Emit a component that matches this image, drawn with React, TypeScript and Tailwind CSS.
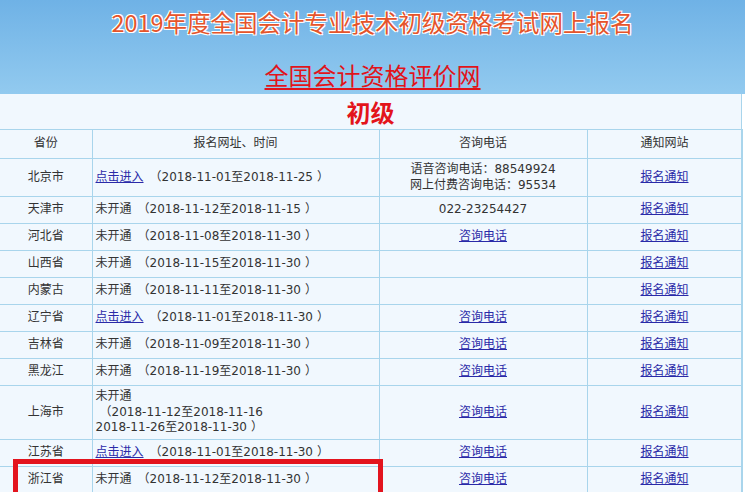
type Row = {
  name: string
  entry: "link" | "closed"
  dates: string[]
  phone: "link" | "none" | string[]
}

const rows: Row[] = [
  { name: "北京市", entry: "link", dates: ["2018-11-01至2018-11-25"], phone: ["语音咨询电话：88549924", "网上付费咨询电话：95534"] },
  { name: "天津市", entry: "closed", dates: ["2018-11-12至2018-11-15"], phone: ["022-23254427"] },
  { name: "河北省", entry: "closed", dates: ["2018-11-08至2018-11-30"], phone: "link" },
  { name: "山西省", entry: "closed", dates: ["2018-11-15至2018-11-30"], phone: "none" },
  { name: "内蒙古", entry: "closed", dates: ["2018-11-11至2018-11-30"], phone: "none" },
  { name: "辽宁省", entry: "link", dates: ["2018-11-01至2018-11-30"], phone: "link" },
  { name: "吉林省", entry: "closed", dates: ["2018-11-09至2018-11-30"], phone: "link" },
  { name: "黑龙江", entry: "closed", dates: ["2018-11-19至2018-11-30"], phone: "link" },
  { name: "上海市", entry: "closed", dates: ["2018-11-12至2018-11-16", "2018-11-26至2018-11-30"], phone: "link" },
  { name: "江苏省", entry: "link", dates: ["2018-11-01至2018-11-30"], phone: "link" },
  { name: "浙江省", entry: "closed", dates: ["2018-11-12至2018-11-30"], phone: "link" },
]

const cell = "border border-[#a9d5ec] px-[3px] py-[3px] leading-[15.5px] h-[27px] align-middle"
const link = "text-[#2a2aa8] underline"

const DateCell = ({ row }: { row: Row }) => {
  if (row.dates.length > 1) {
    return (
      <>
        未开通
        <br />
        <span className="pl-[4px]">（</span>{row.dates[0]}
        <br />
        {row.dates[1]}<span className="pl-[4px]">）</span>
      </>
    )
  }
  return (
    <>
      {row.entry === "link" ? <a className={link}>点击进入</a> : "未开通"}
      <span className="pl-[6px]">（</span>{row.dates[0]}<span className="pl-[4px]">）</span>
    </>
  )
}

export default function App() {
  return (
    <div className="relative w-[745px] h-[492px] overflow-hidden bg-white text-[#333] text-[12px] font-['DejaVu_Sans','Noto_Sans_CJK_SC',sans-serif]">
      <div className="h-[94px] flex flex-col items-center bg-gradient-to-b from-[#6fb2e6] to-[#92caef] font-['Noto_Sans_CJK_SC',sans-serif]">
        <h1 className="mt-[6px] text-[23.5px] leading-[32px] text-[#e5542b] [text-shadow:1px_1px_0_#fff,-1px_-1px_0_#fff,1px_-1px_0_#fff,-1px_1px_0_#fff]">
          2019年度全国会计专业技术初级资格考试网上报名
        </h1>
        <a className="mt-[22px] text-[24px] leading-[30px] text-[#e0141b] underline decoration-2 underline-offset-[3px]">
          全国会计资格评价网
        </a>
      </div>

      <div className="w-[742px] bg-[#f1f8fe] border-r border-[#a9d5ec]">
        <div className="h-[35px] flex items-center justify-center text-[24px] font-bold text-[#e3141b] font-['Noto_Sans_CJK_SC',sans-serif]">
          初级
        </div>
        <table className="w-[742px] table-fixed border-collapse">
          <colgroup>
            <col className="w-[92px]" />
            <col className="w-[287px]" />
            <col className="w-[208px]" />
            <col className="w-[155px]" />
          </colgroup>
          <thead>
            <tr>
              <th className={`${cell} border-l-0 h-[29px] font-normal text-center`}>省份</th>
              <th className={`${cell} h-[29px] font-normal text-center`}>报名网址、时间</th>
              <th className={`${cell} h-[29px] font-normal text-center`}>咨询电话</th>
              <th className={`${cell} h-[29px] font-normal text-center`}>通知网站</th>
            </tr>
          </thead>
          <tbody>
            {rows.map((row) => (
              <tr key={row.name}>
                <td className={`${cell} border-l-0 text-center`}>{row.name}</td>
                <td className={`${cell} text-left`}>
                  <DateCell row={row} />
                </td>
                <td className={`${cell} text-center`}>
                  {row.phone === "link" ? (
                    <a className={link}>咨询电话</a>
                  ) : row.phone === "none" ? null : (
                    row.phone.map((p) => <div key={p}>{p}</div>)
                  )}
                </td>
                <td className={`${cell} text-center`}>
                  <a className={link}>报名通知</a>
                </td>
              </tr>
            ))}
          </tbody>
        </table>
      </div>

      <div className="absolute left-[13px] top-[459px] w-[370px] h-[40px] border-[5px] border-[#e3141e]" />
    </div>
  )
}
